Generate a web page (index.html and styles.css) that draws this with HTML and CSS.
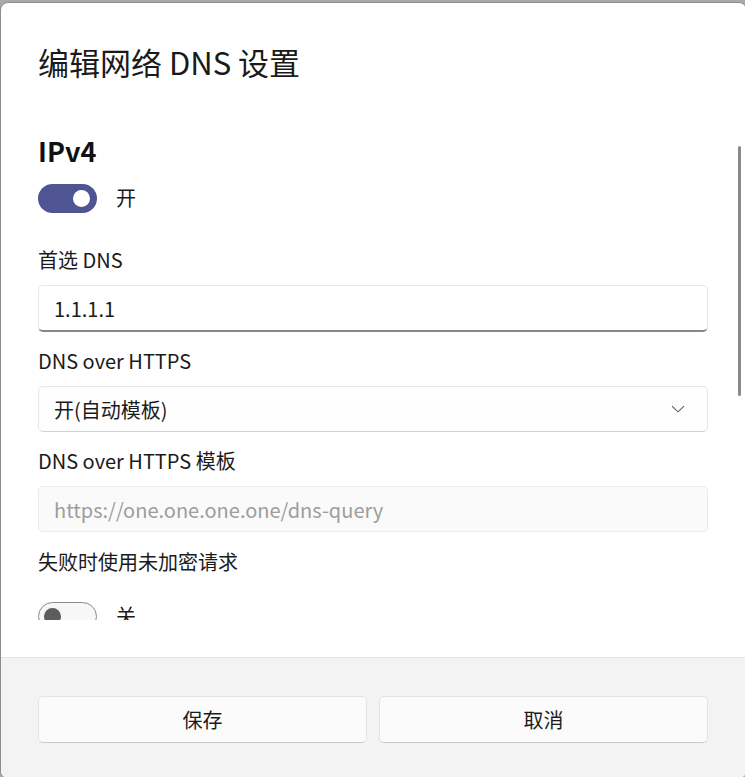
FILE: index.html
```html
<!DOCTYPE html>
<html lang="zh-CN">
<head>
<meta charset="utf-8">
<title>编辑网络 DNS 设置</title>
<link rel="stylesheet" href="styles.css">
</head>
<body>
<div class="dialog">
  <header class="dialog-header">
    <h1 class="dialog-title">编辑网络 DNS 设置</h1>
  </header>
  <div class="scroll-area">
    <div class="scroll-content">
      <h2 class="section-title">IPv4</h2>
      <div class="toggle-row toggle-row-first">
        <span class="toggle toggle-on"><span class="thumb"></span></span>
        <span class="toggle-label">开</span>
      </div>

      <div class="field-label field-label-first">首选 DNS</div>
      <div class="textbox textbox-active">1.1.1.1</div>

      <div class="field-label">DNS over HTTPS</div>
      <div class="combo">
        <span>开(自动模板)</span>
        <svg class="chevron" width="14" height="8" viewBox="0 0 14 8"><path d="M1 1.2 L7 6.8 L13 1.2" fill="none" stroke="#5f5f5f" stroke-width="1.1"/></svg>
      </div>

      <div class="field-label">DNS over HTTPS 模板</div>
      <div class="textbox textbox-disabled">https://one.one.one.one/dns-query</div>

      <div class="field-label field-label-last">失败时使用未加密请求</div>
      <div class="toggle-row toggle-row-last">
        <span class="toggle toggle-off"><span class="thumb"></span></span>
        <span class="toggle-label">关</span>
      </div>
    </div>
    <div class="scrollbar"></div>
  </div>
  <div class="spacer"></div>
  <footer class="dialog-footer">
    <button class="btn">保存</button>
    <button class="btn">取消</button>
  </footer>
</div>
</body>
</html>
```
FILE: styles.css
```css
* { box-sizing: border-box; }
html, body { margin: 0; padding: 0; }
body {
  width: 745px;
  height: 777px;
  overflow: hidden;
  background: #a9a9a9;
  font-family: "Noto Sans CJK SC", "Noto Sans", sans-serif;
  color: #1b1b1b;
}
.dialog {
  margin-top: 2px;
  width: 747px;
  height: 777px;
  background: #ffffff;
  border: 1px solid #8c8c8c;
  border-radius: 8px;
  display: flex;
  flex-direction: column;
  overflow: hidden;
}
.dialog-header {
  padding: 41px 37px 29px;
}
.dialog-title {
  margin: 0;
  font-size: 31px;
  line-height: 36px;
  font-weight: 400;
  color: #1a1a1a;
}
.scroll-area {
  position: relative;
  height: 511px;
  overflow: hidden;
  flex: none;
}
.scroll-content {
  padding: 24px 38px 0 37px;
  width: 745px;
}
.section-title {
  margin: 0;
  font-size: 27px;
  line-height: 36px;
  font-weight: 600;
  color: #111;
}
.toggle-row {
  display: flex;
  align-items: center;
  gap: 19px;
  height: 30px;
}
.toggle-row-first { margin-top: 14px; }
.toggle-row-last { margin-top: 25px; }
.toggle {
  position: relative;
  width: 59px;
  height: 29px;
  border-radius: 15px;
  flex: none;
}
.toggle-on { background: #4f5592; }
.toggle-on .thumb {
  position: absolute;
  right: 7px;
  top: 6px;
  width: 17px;
  height: 17px;
  border-radius: 50%;
  background: #fff;
}
.toggle-off {
  background: #f7f7f7;
  border: 1.5px solid #8a8a8a;
}
.toggle-off .thumb {
  position: absolute;
  left: 5px;
  top: 5px;
  width: 17px;
  height: 17px;
  border-radius: 50%;
  background: #5d5d5d;
}
.toggle-label {
  font-size: 20px;
  line-height: 28px;
  color: #1b1b1b;
}
.field-label {
  font-size: 20px;
  line-height: 28px;
  margin-top: 15px;
  margin-bottom: 11px;
  color: #1b1b1b;
}
.field-label-first { margin-top: 33px; }
.field-label-last { margin-top: 16px; }
.textbox, .combo {
  width: 670px;
  height: 47px;
  border-radius: 5px;
  border: 1px solid #e6e6e6;
  padding: 0 15px;
  font-size: 20px;
  display: flex;
  align-items: center;
}
.textbox-active {
  background: #fff;
  border-bottom: 2px solid #868686;
  padding-top: 1px;
  color: #1b1b1b;
}
.combo {
  background: #fefefe;
  border-bottom-color: #d2d2d2;
  justify-content: space-between;
  height: 46px;
  padding-right: 22px;
}
.chevron { display: block; }
.textbox-disabled {
  background: #fafafa;
  border-color: #ebebeb;
  color: #9d9d9d;
  height: 46px;
}
.scrollbar {
  position: absolute;
  right: 5px;
  top: 37px;
  width: 3px;
  height: 250px;
  border-radius: 2px;
  background: #8a8a8a;
}
.spacer {
  height: 37px;
  flex: none;
}
.dialog-footer {
  flex: 1;
  background: #f3f3f3;
  border-top: 1px solid #e3e3e3;
  padding: 38px 38px 0 37px;
  display: grid;
  grid-template-columns: 1fr 1fr;
  column-gap: 12px;
  align-content: start;
}
.btn {
  height: 47px;
  border-radius: 5px;
  border: 1px solid #e4e4e4;
  border-bottom-color: #cbcbcb;
  background: #fbfbfb;
  font-family: "Noto Sans CJK SC", "Noto Sans", sans-serif;
  font-size: 20px;
  color: #1b1b1b;
  padding: 0;
}
```
